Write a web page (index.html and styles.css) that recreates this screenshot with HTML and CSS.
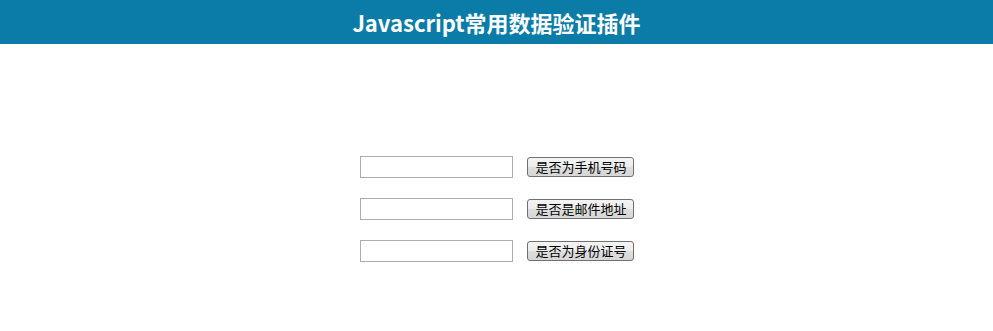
FILE: index.html
```html
<!DOCTYPE html>
<html lang="zh-CN">
<head>
<meta charset="utf-8">
<title>Javascript常用数据验证插件</title>
<link rel="stylesheet" href="styles.css">
</head>
<body>
<header class="top-bar">
  <h1 class="title">Javascript常用数据验证插件</h1>
</header>
<main class="form">
  <div class="row">
    <input class="field" type="text">
    <button class="btn" type="button">是否为手机号码</button>
  </div>
  <div class="row">
    <input class="field" type="text">
    <button class="btn" type="button">是否是邮件地址</button>
  </div>
  <div class="row">
    <input class="field" type="text">
    <button class="btn" type="button">是否为身份证号</button>
  </div>
</main>
</body>
</html>
```

FILE: styles.css
```css
html, body {
  margin: 0;
  padding: 0;
  background: #ffffff;
}

body {
  font-family: "Noto Sans CJK SC", "Noto Sans", sans-serif;
}

.top-bar {
  height: 44px;
  background: #0a7ca7;
  display: flex;
  align-items: center;
  justify-content: center;
}

.title {
  margin: 0;
  color: #ffffff;
  font-size: 22px;
  font-weight: bold;
  line-height: 44px;
}

.form {
  padding-top: 112px;
  display: flex;
  flex-direction: column;
  align-items: center;
  gap: 20px;
}

.row {
  display: flex;
  align-items: center;
  gap: 14px;
  height: 22px;
  padding-left: 1px;
}

.field {
  box-sizing: border-box;
  width: 153px;
  height: 22px;
  margin: 0;
  padding: 0 3px;
  border: 1px solid #abadb3;
  background: #ffffff;
  font-size: 13px;
}

.btn {
  box-sizing: border-box;
  height: 20px;
  margin: 0;
  padding: 0 6px 0 7px;
  border: 1px solid #707070;
  border-radius: 3px;
  background: linear-gradient(#f4f4f4 0%, #ececec 50%, #dedede 51%, #d6d6d6 100%);
  color: #000000;
  font-family: "Noto Sans CJK SC", sans-serif;
  font-size: 13px;
  line-height: 18px;
  cursor: pointer;
}
```
